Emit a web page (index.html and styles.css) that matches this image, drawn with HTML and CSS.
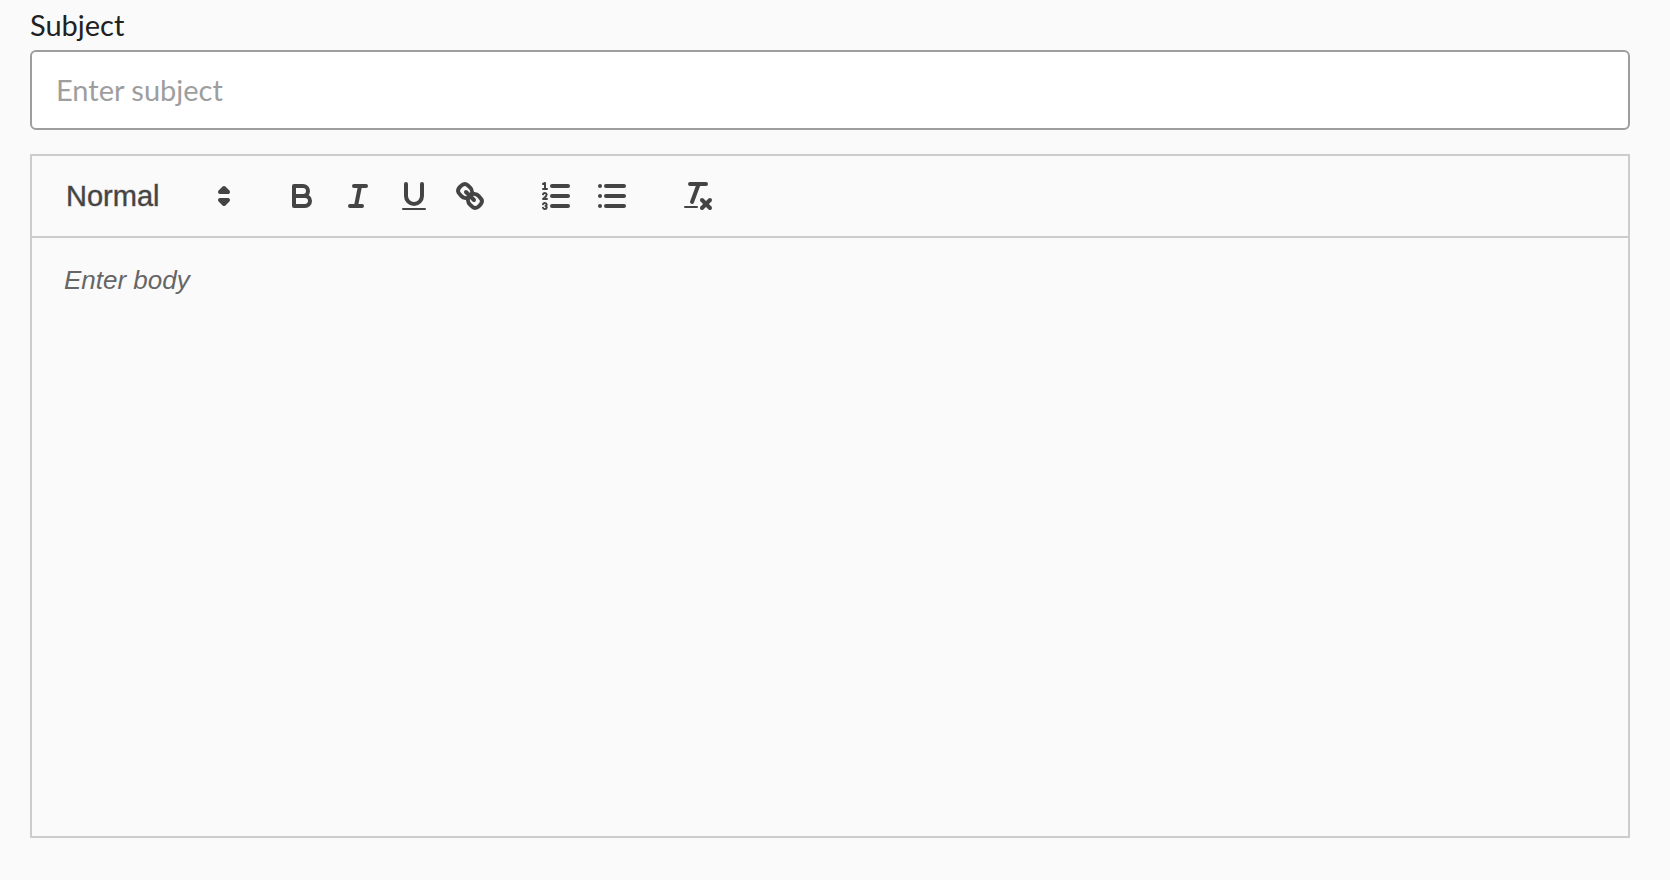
FILE: index.html
```html
<!DOCTYPE html>
<html lang="en">
<head>
<meta charset="utf-8">
<title>Message</title>
<link rel="stylesheet" href="styles.css">
</head>
<body>
<form class="message-form">
	<label class="field-label" for="subject">Subject</label>
	<input class="field-input" id="subject" type="text" placeholder="Enter subject">
	<div class="editor">
		<div class="toolbar">
			<div class="formats picker">
				<select class="picker-select" aria-label="Text style">
					<option>Normal</option>
				</select>
				<svg class="icon picker-arrows" viewBox="0 0 18 18"><polygon class="solid" points="7 11 9 13 11 11 7 11"/><polygon class="solid" points="7 7 9 5 11 7 7 7"/></svg>
			</div>
			<div class="formats">
				<button class="tool" type="button" aria-label="Bold">
					<svg class="icon" viewBox="0 0 18 18"><path d="M5,4H9.5A2.5,2.5,0,0,1,12,6.5v0A2.5,2.5,0,0,1,9.5,9H5V4Z"/><path d="M5,9h5.5A2.5,2.5,0,0,1,13,11.5v0A2.5,2.5,0,0,1,10.5,14H5V9Z"/></svg>
				</button>
				<button class="tool" type="button" aria-label="Italic">
					<svg class="icon" viewBox="0 0 18 18"><line x1="7" x2="13" y1="4" y2="4"/><line x1="5" x2="11" y1="14" y2="14"/><line x1="8" x2="10" y1="14" y2="4"/></svg>
				</button>
				<button class="tool" type="button" aria-label="Underline">
					<svg class="icon" viewBox="0 0 18 18"><path d="M5,3V9a4.012,4.012,0,0,0,4,4H9a4.012,4.012,0,0,0,4-4V3"/><rect class="fill" height="1" rx="0.5" ry="0.5" width="12" x="3" y="15"/></svg>
				</button>
				<button class="tool" type="button" aria-label="Link">
					<svg class="icon" viewBox="0 0 18 18"><line x1="7" x2="11" y1="7" y2="11"/><path d="M8.9,4.577a3.476,3.476,0,0,1,.36,4.679A3.476,3.476,0,0,1,4.577,8.9C3.185,7.5,2.035,6.4,4.217,4.217S7.5,3.185,8.9,4.577Z"/><path d="M13.423,9.1a3.476,3.476,0,0,0-4.679-.36,3.476,3.476,0,0,0,.36,4.679c1.392,1.392,2.5,2.542,4.679.36S14.815,10.5,13.423,9.1Z"/></svg>
				</button>
			</div>
			<div class="formats">
				<button class="tool" type="button" aria-label="Numbered list">
					<svg class="icon" viewBox="0 0 18 18"><line x1="7" x2="15" y1="4" y2="4"/><line x1="7" x2="15" y1="9" y2="9"/><line x1="7" x2="15" y1="14" y2="14"/><line class="thin" x1="2.5" x2="4.5" y1="5.5" y2="5.5"/><path class="thin" d="M2.5,3L3.5,2.5V5.5"/><path class="thin" d="M4.5,10.5h-2c0-.234,1.85-1.076,1.85-2.234A0.959,0.959,0,0,0,2.5,8.156"/><path class="thin" d="M2.5,14.846a0.959,0.959,0,0,0,1.85-.109A0.7,0.7,0,0,0,3.75,14a0.688,0.688,0,0,0,.6-0.736,0.959,0.959,0,0,0-1.85-.109"/></svg>
				</button>
				<button class="tool" type="button" aria-label="Bullet list">
					<svg class="icon" viewBox="0 0 18 18"><line x1="6" x2="15" y1="4" y2="4"/><line x1="6" x2="15" y1="9" y2="9"/><line x1="6" x2="15" y1="14" y2="14"/><line x1="3" x2="3" y1="4" y2="4"/><line x1="3" x2="3" y1="9" y2="9"/><line x1="3" x2="3" y1="14" y2="14"/></svg>
				</button>
			</div>
			<div class="formats">
				<button class="tool" type="button" aria-label="Clear formatting">
					<svg class="icon" viewBox="0 0 18 18"><line x1="5" x2="13" y1="3" y2="3"/><line x1="6" x2="9.35" y1="12" y2="3"/><line x1="11" x2="15" y1="11" y2="15"/><line x1="15" x2="11" y1="11" y2="15"/><rect class="fill" height="1" rx="0.5" ry="0.5" width="7" x="2" y="14"/></svg>
				</button>
			</div>
		</div>
		<textarea class="editor-body" aria-label="Body" placeholder="Enter body"></textarea>
	</div>
</form>
</body>
</html>
```
FILE: styles.css
```css
*{box-sizing:border-box;}
body{margin:0;background:#fafafa;}
.message-form{padding:6px 40px 40px 30px;}
.field-label{display:block;height:44px;font:29px/38px Lato,sans-serif;color:#212121;}
.field-input{display:block;width:100%;height:80px;padding:0 24px 2px;border:2px solid #9e9e9e;border-radius:6px;background:#fff;font:29px/38px Lato,sans-serif;color:#212121;}
.field-input::placeholder{color:#9e9e9e;opacity:1;}

.editor{margin-top:24px;border:2px solid #ccc;}
.toolbar{display:flex;flex-wrap:wrap;gap:0 30px;padding:16px;border-bottom:2px solid #ccc;}
.formats{display:flex;}
.picker{position:relative;width:196px;height:48px;}
.picker-select{width:100%;padding:0 40px 0 18px;border:0;background:none;appearance:none;font:500 29px/48px "Liberation Sans",sans-serif;color:#444;-webkit-text-stroke:1px rgba(68,68,68,.4);}
.picker-arrows{position:absolute;top:6px;right:2px;pointer-events:none;}
.tool{width:56px;height:48px;padding:6px 10px;border:0;background:none;cursor:pointer;}
.icon{display:block;width:36px;height:36px;fill:none;stroke:#444;stroke-width:2;stroke-linecap:round;stroke-linejoin:round;}
.icon .thin{stroke-width:1;}
.icon .fill{fill:#444;stroke:none;}
.icon .solid{fill:#444;}

.editor-body{display:block;width:100%;height:598px;padding:24px 32px;border:0;background:none;resize:none;font:26px/37px "Liberation Sans",sans-serif;color:#212121;}
.editor-body::placeholder{color:#666;font-style:italic;opacity:1;}
```
